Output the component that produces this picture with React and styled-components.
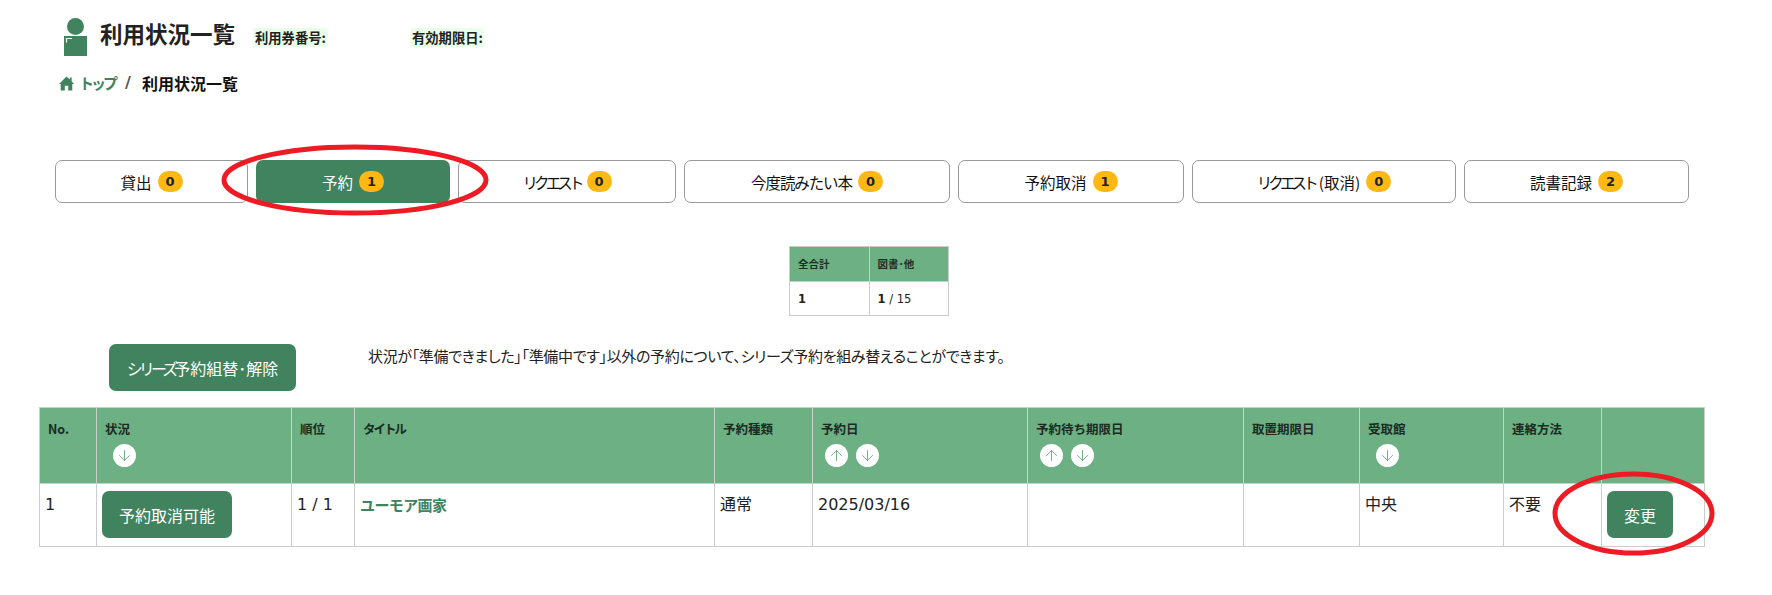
import React from "react";
import styled, { createGlobalStyle } from "styled-components";
import { ArrowDown, ArrowUp } from "lucide-react";

const GREEN = "#41835e";
const HEAD = "#6cb084";
const FONT = `"DejaVu Sans", "Noto Sans CJK JP", sans-serif`;

const Global = createGlobalStyle`
  html, body { margin: 0; padding: 0; background: #fff; }
  body { font-family: ${FONT}; color: #222; }
`;

const Page = styled.div`
  position: relative;
  width: 1772px;
  height: 595px;
  overflow: hidden;
  box-sizing: border-box;
  padding-top: 18px;
`;

const Header = styled.header`
  display: flex;
  align-items: center;
  height: 38px;
  padding-left: 63px;
`;

const PersonIcon = styled.svg`
  width: 25px;
  height: 38px;
  flex: none;
`;

const Title = styled.h1`
  margin: 0 0 0 12px;
  width: 154px;
  font: 700 22.5px/28px "Noto Sans CJK JP", sans-serif;
  color: #222;
  white-space: nowrap;
  position: relative;
  top: -4px;
`;

const Meta = styled.span`
  background: #e9ffe9;
  font: 700 13.3px/18px "Noto Sans CJK JP", sans-serif;
  color: #222;
  padding: 0 1px;
`;

const MetaSlot = styled.div`
  width: ${(p) => p.$w}px;
  flex: none;
  white-space: nowrap;
`;

const Breadcrumb = styled.nav`
  display: flex;
  align-items: center;
  height: 22px;
  margin-top: 16px;
  padding-left: 59px;
`;

const HomeIcon = styled.svg`
  width: 15px;
  height: 15px;
  flex: none;
`;

const Crumb = styled.span`
  margin-left: 5px;
  font: 700 15px/22px "Noto Sans CJK JP", sans-serif;
  letter-spacing: -3px;
  color: ${GREEN};
  width: 41px;
  white-space: nowrap;
`;

const Sep = styled.span`
  font: 700 16px/22px "DejaVu Sans", sans-serif;
  color: #555;
  width: 16px;
  text-align: center;
`;

const Current = styled.span`
  margin-left: 6px;
  font: 700 16px/22px "Noto Sans CJK JP", sans-serif;
  color: #111;
  white-space: nowrap;
`;

const Tabs = styled.div`
  display: grid;
  grid-template-columns: 193px 194px 218px 266px 226px 264px 225px;
  column-gap: 8px;
  margin: 66px 0 0 55px;
`;

const Tab = styled.a`
  display: flex;
  align-items: center;
  justify-content: center;
  gap: 6px;
  height: 43px;
  box-sizing: border-box;
  border: ${(p) => (p.$active ? "none" : "1px solid #999")};
  border-radius: 7px;
  background: ${(p) => (p.$active ? GREEN : "#fff")};
  color: ${(p) => (p.$active ? "#fff" : "#111")};
  font: 400 15.5px/20px "Noto Sans CJK JP", sans-serif;
  letter-spacing: ${(p) => p.$tight || 0}px;
  white-space: nowrap;
`;

const Narrow = styled.span`
  letter-spacing: -3.9px;
  margin-right: ${(p) => p.$after || 0}px;
`;

const Badge = styled.span`
  display: inline-flex;
  align-items: center;
  justify-content: center;
  width: 25px;
  height: 21px;
  border-radius: 11px;
  background: #fdb813;
  color: #222;
  font: 700 13px/21px "DejaVu Sans", sans-serif;
  letter-spacing: 0;
`;

const Summary = styled.table`
  border-collapse: collapse;
  table-layout: fixed;
  width: 160px;
  margin: 43px 0 0 789px;
`;

const SummaryHead = styled.th`
  background: ${HEAD};
  border: 1px solid #ccc;
  height: 34px;
  padding: 0 8px;
  text-align: left;
  font: 700 10.5px/14px "Noto Sans CJK JP", sans-serif;
  color: #1f2f25;
`;

const SummaryCell = styled.td`
  border: 1px solid #ccc;
  height: 33px;
  padding: 0 8px;
  font: 400 11.5px/14px "DejaVu Sans", sans-serif;
  color: #222;
`;

const Strong = styled.strong`
  font-weight: 700;
`;

const SeriesRow = styled.div`
  display: flex;
  align-items: flex-start;
  margin: 28px 0 0 109px;
`;

const GreenButton = styled.button`
  display: inline-flex;
  align-items: center;
  justify-content: center;
  width: ${(p) => p.$w}px;
  height: 47px;
  border: none;
  border-radius: 7px;
  background: ${GREEN};
  color: #fff;
  padding: 0;
  font: 400 16px/20px "Noto Sans CJK JP", sans-serif;
  white-space: nowrap;
`;

const Note = styled.p`
  margin: 1px 0 0 72px;
  font: 400 15px/22px "Noto Sans CJK JP", sans-serif;
  font-feature-settings: "palt";
  letter-spacing: -0.33px;
  color: #222;
  white-space: nowrap;
`;

const DataTable = styled.table`
  border-collapse: collapse;
  table-layout: fixed;
  width: 1665px;
  margin: 16px 0 0 39px;
`;

const HeadCell = styled.th`
  background: ${HEAD};
  border: 1px solid #c4d4c9;
  height: 76px;
  box-sizing: border-box;
  padding: 11px 8px 0;
  vertical-align: top;
  text-align: left;
  font: 700 12.5px/20px "Noto Sans CJK JP", sans-serif;
  color: #1b2b21;
  letter-spacing: ${(p) => p.$tight || 0}px;
`;

const BodyCell = styled.td`
  border: 1px solid #ccc;
  height: 63px;
  box-sizing: border-box;
  padding: 9px 5px 0;
  vertical-align: top;
  font: 400 16px/24px "DejaVu Sans", "Noto Sans CJK JP", sans-serif;
  color: #222;
`;

const ButtonCell = styled(BodyCell)`
  padding: 7px 5px 0;
`;

const TitleLink = styled.a`
  font: 700 15px/24px "Noto Sans CJK JP", sans-serif;
  color: ${GREEN};
  letter-spacing: -0.6px;
`;

const SortRow = styled.div`
  display: flex;
  gap: 8px;
  margin: 5px 0 0 ${(p) => p.$indent}px;
`;

const SortButton = styled.span`
  display: inline-flex;
  align-items: center;
  justify-content: center;
  width: 23px;
  height: 23px;
  border-radius: 50%;
  background: #fff;
  color: #5fa178;
`;

const Circle = styled.svg`
  position: absolute;
  left: ${(p) => p.$x}px;
  top: ${(p) => p.$y}px;
  width: ${(p) => p.$w}px;
  height: ${(p) => p.$h}px;
  pointer-events: none;
`;

const tabs = [
  ["貸出", 0],
  ["予約", 1, true],
  [<Narrow key="k">リクエスト</Narrow>, 0],
  ["今度読みたい本", 0, false, -1.1],
  ["予約取消", 1],
  [<React.Fragment key="k"><Narrow $after={4}>リクエスト</Narrow>(取消)</React.Fragment>, 0],
  ["読書記録", 2],
];

const widths = [57, 195, 63, 360, 98, 215, 216, 116, 144, 98, 103];

const Sort = ({ up, down, indent = 8 }) => (
  <SortRow $indent={indent}>
    {up && (
      <SortButton>
        <ArrowUp size={17} strokeWidth={1.2} />
      </SortButton>
    )}
    {down && (
      <SortButton>
        <ArrowDown size={17} strokeWidth={1.2} />
      </SortButton>
    )}
  </SortRow>
);

const Ring = ({ x, y, w, h }) => (
  <Circle $x={x} $y={y} $w={w} $h={h} viewBox={`0 0 ${w} ${h}`}>
    <ellipse
      cx={w / 2}
      cy={h / 2}
      rx={w / 2 - 3}
      ry={h / 2 - 3}
      fill="none"
      stroke="#ed1c24"
      strokeWidth="5"
    />
  </Circle>
);

export default function App() {
  return (
    <Page>
      <Global />
      <Header>
        <PersonIcon viewBox="0 0 25 38">
          <circle cx="12.5" cy="8.5" r="8.5" fill={GREEN} />
          <rect x="1" y="18" width="23" height="20" fill={GREEN} />
          <path d="M3.5 24.5 V20.5 H9" fill="none" stroke="#fff" strokeWidth="1.2" />
        </PersonIcon>
        <Title>利用状況一覧</Title>
        <MetaSlot $w={157}>
          <Meta>利用券番号:</Meta>
        </MetaSlot>
        <MetaSlot $w={90}>
          <Meta>有効期限日:</Meta>
        </MetaSlot>
      </Header>
      <Breadcrumb>
        <HomeIcon viewBox="0 0 14 14">
          <path d="M7 0.5 L10 3.3 V1.5 H11.8 V5 L14 7.5 H12.4 V13.5 H8.6 V9 H5.4 V13.5 H1.6 V7.5 H0 Z" fill={GREEN} />
        </HomeIcon>
        <Crumb>トップ</Crumb>
        <Sep>/</Sep>
        <Current>利用状況一覧</Current>
      </Breadcrumb>
      <Tabs>
        {tabs.map(([label, n, active, tight], i) => (
          <Tab key={i} $active={active} $tight={tight}>
            <span>{label}</span>
            <Badge>{n}</Badge>
          </Tab>
        ))}
      </Tabs>
      <Summary>
        <thead>
          <tr>
            <SummaryHead>全合計</SummaryHead>
            <SummaryHead>図書･他</SummaryHead>
          </tr>
        </thead>
        <tbody>
          <tr>
            <SummaryCell><Strong>1</Strong></SummaryCell>
            <SummaryCell><Strong>1</Strong> / 15</SummaryCell>
          </tr>
        </tbody>
      </Summary>
      <SeriesRow>
        <GreenButton $w={187}><Narrow>シリーズ</Narrow>予約組替･解除</GreenButton>
        <Note>状況が「準備できました」「準備中です」以外の予約について、シリーズ予約を組み替えることができます。</Note>
      </SeriesRow>
      <DataTable>
        <colgroup>
          {widths.map((w, i) => (
            <col key={i} width={w} />
          ))}
        </colgroup>
        <thead>
          <tr>
            <HeadCell>No.</HeadCell>
            <HeadCell>状況<Sort down /></HeadCell>
            <HeadCell>順位</HeadCell>
            <HeadCell $tight={-2}>タイトル</HeadCell>
            <HeadCell>予約種類</HeadCell>
            <HeadCell>予約日<Sort up down indent={4} /></HeadCell>
            <HeadCell>予約待ち期限日<Sort up down indent={4} /></HeadCell>
            <HeadCell>取置期限日</HeadCell>
            <HeadCell>受取館<Sort down /></HeadCell>
            <HeadCell>連絡方法</HeadCell>
            <HeadCell />
          </tr>
        </thead>
        <tbody>
          <tr>
            <BodyCell>1</BodyCell>
            <ButtonCell><GreenButton $w={130}>予約取消可能</GreenButton></ButtonCell>
            <BodyCell>1 / 1</BodyCell>
            <BodyCell><TitleLink>ユーモア画家</TitleLink></BodyCell>
            <BodyCell>通常</BodyCell>
            <BodyCell>2025/03/16</BodyCell>
            <BodyCell />
            <BodyCell />
            <BodyCell>中央</BodyCell>
            <BodyCell>不要</BodyCell>
            <ButtonCell><GreenButton $w={66}>変更</GreenButton></ButtonCell>
          </tr>
        </tbody>
      </DataTable>
      <Ring x={221} y={144} w={268} h={72} />
      <Ring x={1552} y={471} w={163} h={85} />
    </Page>
  );
}
